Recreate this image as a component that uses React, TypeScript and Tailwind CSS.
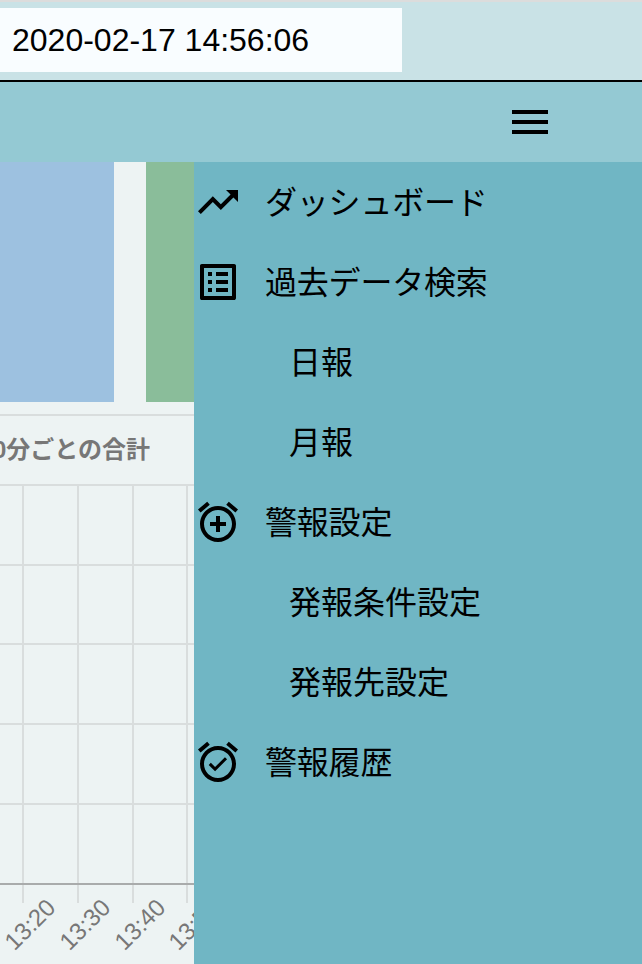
const ALARM_BASE =
  'M7.88 3.39L6.6 1.86 2 5.71l1.29 1.53 4.59-3.85zM22 5.72l-4.6-3.86-1.29 1.53 4.6 3.86L22 5.72zM12 4c-4.97 0-9 4.03-9 9s4.03 9 9 9c4.97 0 9-4.03 9-9s-4.03-9-9-9zm0 16c-3.86 0-7-3.14-7-7s3.14-7 7-7 7 3.14 7 7-3.14 7-7 7z'

const icons = {
  trend: 'M16 6l2.29 2.29-4.88 4.88-4-4L2 16.59 3.41 18l6-6 4 4 6.3-6.29L22 12V6z',
  list: 'M19 5v14H5V5h14m1.1-2H3.9c-.5 0-.9.4-.9.9v16.2c0 .4.4.9.9.9h16.2c.4 0 .9-.5.9-.9V3.9c0-.5-.5-.9-.9-.9zM11 7h6v2h-6V7zm0 4h6v2h-6v-2zm0 4h6v2h-6zM7 7h2v2H7zm0 4h2v2H7zm0 4h2v2H7z',
  alarmAdd: ALARM_BASE + 'm1-11h-2v3H8v2h3v3h2v-3h3v-2h-3V9z',
  alarmOn: ALARM_BASE + 'm-1.46-5.47L8.41 12.4l-1.06 1.06 3.18 3.18 6-6-1.06-1.06-4.93 4.95z',
}

const menu: { title: string; icon?: string }[] = [
  { title: 'ダッシュボード', icon: icons.trend },
  { title: '過去データ検索', icon: icons.list },
  { title: '日報' },
  { title: '月報' },
  { title: '警報設定', icon: icons.alarmAdd },
  { title: '発報条件設定' },
  { title: '発報先設定' },
  { title: '警報履歴', icon: icons.alarmOn },
]

const gridX = [23, 78, 133, 187]
const gridY = [1, 81, 160, 240, 320]
const labels = ['13:20', '13:30', '13:40', '13:50']

function Chart() {
  return (
    <svg width="194" height="479" className="block">
      {gridY.map((y) => (
        <line key={y} x1="0" x2="194" y1={y} y2={y} stroke="#d9dddd" strokeWidth="2" />
      ))}
      {gridX.map((x) => (
        <line key={x} x1={x} x2={x} y1="0" y2="419" stroke="#d9dddd" strokeWidth="2" />
      ))}
      <line x1="0" x2="194" y1="400" y2="400" stroke="#a9abab" strokeWidth="2" />
      {labels.map((t, i) => (
        <text
          key={t}
          transform={`translate(${gridX[i] + 34} 425) rotate(-45)`}
          textAnchor="end"
          fontSize="24"
          fill="#777777"
          fontFamily="'Liberation Sans', sans-serif"
        >
          {t}
        </text>
      ))}
    </svg>
  )
}

export default function App() {
  return (
    <div className="flex h-[964px] w-[642px] flex-col overflow-hidden bg-[#edf3f3] font-['Liberation_Sans','Noto_Sans_CJK_JP',sans-serif] text-black">
      <header className="h-[82px] shrink-0 border-t-2 border-b-2 border-t-[#dcdcdc] border-b-black bg-[#c9e2e6] pt-[6px]">
        <div className="flex h-[64px] w-[402px] items-center bg-[#f9fdff] pl-3 text-[32px] leading-none">
          2020-02-17 14:56:06
        </div>
      </header>

      <nav className="flex h-[80px] shrink-0 items-center justify-end bg-[#94c9d3] pr-[94px]">
        <div className="flex w-9 flex-col gap-[6px]">
          <span className="h-1 bg-black" />
          <span className="h-1 bg-black" />
          <span className="h-1 bg-black" />
        </div>
      </nav>

      <div className="flex min-h-0 flex-1">
        <main className="w-[194px] shrink-0 overflow-hidden">
          <div className="flex h-[240px] justify-between">
            <div className="w-[114px] bg-[#9dc1e0]" />
            <div className="w-[48px] bg-[#8abd9a]" />
          </div>
          <div className="mt-3 border-t-2 border-[#d9dddd]">
            <div className="flex h-[68px] w-[150px] items-center justify-end overflow-hidden whitespace-nowrap text-[24px] font-bold text-[#777777]">
              10分ごとの合計
            </div>
            <Chart />
          </div>
        </main>

        <aside className="flex-1 bg-[#70b6c4]">
          <ul>
            {menu.map((item) => (
              <li key={item.title} className="flex h-20 items-center text-[32px] leading-none">
                {item.icon ? (
                  <>
                    <svg viewBox="0 0 24 24" className="h-12 w-12 shrink-0" fill="currentColor">
                      <path d={item.icon} />
                    </svg>
                    <span className="ml-[23px] pt-[2px] tracking-[-0.2px]">{item.title}</span>
                  </>
                ) : (
                  <span className="ml-[95px] pt-[2px]">{item.title}</span>
                )}
              </li>
            ))}
          </ul>
        </aside>
      </div>
    </div>
  )
}
